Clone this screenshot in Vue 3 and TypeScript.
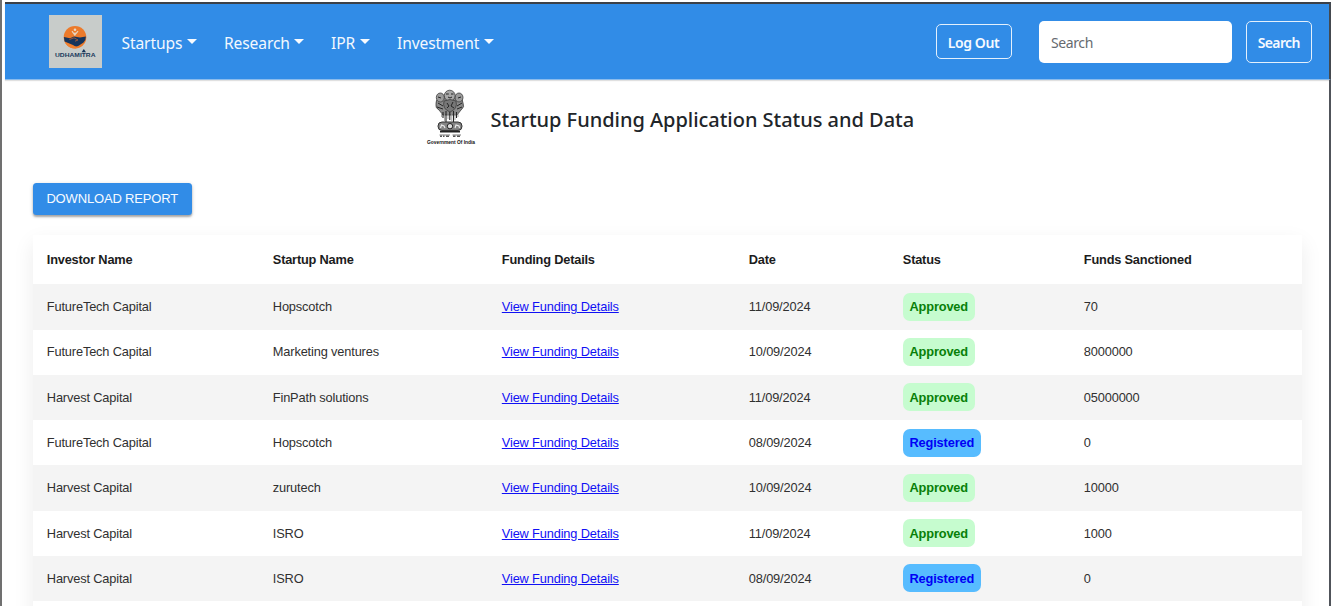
<script setup lang="ts">
type Status = 'Approved' | 'Registered'

interface Application {
  investor: string
  startup: string
  date: string
  status: Status
  funds: string
}

const menus: { label: string; cls: string }[] = [
  { label: 'Startups', cls: 'm-startups' },
  { label: 'Research', cls: 'm-research' },
  { label: 'IPR', cls: 'm-ipr' },
  { label: 'Investment', cls: 'm-investment' },
]

const columns: string[] = [
  'Investor Name',
  'Startup Name',
  'Funding Details',
  'Date',
  'Status',
  'Funds Sanctioned',
]

const applications: Application[] = [
  { investor: 'FutureTech Capital', startup: 'Hopscotch', date: '11/09/2024', status: 'Approved', funds: '70' },
  { investor: 'FutureTech Capital', startup: 'Marketing ventures', date: '10/09/2024', status: 'Approved', funds: '8000000' },
  { investor: 'Harvest Capital', startup: 'FinPath solutions', date: '11/09/2024', status: 'Approved', funds: '05000000' },
  { investor: 'FutureTech Capital', startup: 'Hopscotch', date: '08/09/2024', status: 'Registered', funds: '0' },
  { investor: 'Harvest Capital', startup: 'zurutech', date: '10/09/2024', status: 'Approved', funds: '10000' },
  { investor: 'Harvest Capital', startup: 'ISRO', date: '11/09/2024', status: 'Approved', funds: '1000' },
  { investor: 'Harvest Capital', startup: 'ISRO', date: '08/09/2024', status: 'Registered', funds: '0' },
]
</script>

<template>
  <div class="frame">
    <header class="navbar">
      <svg class="logo" viewBox="0 0 53 53" width="53" height="53">
        <rect width="53" height="53" fill="#c8ccca" />
        <circle cx="26" cy="22.3" r="11.3" fill="#ec7a2b" />
        <path d="M14.9 22 L21 23.2 L25 21.5 L31 22.5 L36.9 21.5 Q37 25 34.5 27.5 L30 30.5 Q27 32.5 24 30 L15.6 26.5 Z" fill="#15345c" />
        <path d="M15.8 27 L23.5 30.5 Q26 32.8 29 31.5 L27 33.6 Q19 33.5 15.8 27Z" fill="#f08030" />
        <path d="M20.5 24.5 L25 22.8 L29 25 L26 26.2" fill="none" stroke="#a65b38" stroke-width=".9" />
        <circle cx="26" cy="14.7" r="1.3" fill="#e9d9c8" />
        <path d="M23 16.2 L25.8 20 L29 16.2 M26 17.5 V20.5" fill="none" stroke="#e9d3bd" stroke-width="1.2" />
        <text class="logo-text" x="6" y="42" textLength="40.5" lengthAdjust="spacingAndGlyphs">UDHAMITRA</text>
        <path d="M32.6 37.2 L34.8 34 L37 37.2 Z" fill="#15345c" />
      </svg>
      <nav class="menus">
        <a v-for="m in menus" :key="m.label" class="menu" :class="m.cls">
          <span>{{ m.label }}</span><i class="caret"></i>
        </a>
      </nav>
      <button class="btn logout">Log Out</button>
      <input class="search" type="text" placeholder="Search" />
      <button class="btn find">Search</button>
    </header>

    <main class="content">
      <div class="title-row">
        <svg class="emblem" viewBox="0 0 50 60" width="50" height="60">
          <g stroke="#3d3d3d" stroke-width=".8">
            <path d="M14 8 Q9 11 10 15 Q9 19 13 21 L17 26 L31 26 L35 21 Q39 18 37 14 Q37 9 33 8 Z" fill="#8b8b8b" />
            <ellipse cx="14.3" cy="8.5" rx="4" ry="4.5" fill="#9a9a9a" />
            <ellipse cx="33" cy="8.5" rx="4" ry="4.5" fill="#9a9a9a" />
            <ellipse cx="23.7" cy="6.7" rx="5.4" ry="5.5" fill="#a8a8a8" />
            <path d="M18 12 Q24 9 30 12 Q32 20 24 23 Q16 20 18 12" fill="#777" />
          </g>
          <g fill="none" stroke="#252525" stroke-width="1">
            <path d="M20 5 H22.8 M25 5 H27.5 M22 8 Q24 10 26 8 M12 8 L15 9 M32 9 L35 8" />
            <path d="M12 14 L17 17 M11 18 L17 20 M31 17 L36 14 M31 20 L36 18 M21 14 L23 17 L21 19 M27 13 L25 17 L28 19" />
            <path d="M17 23 V29 M20 22 V33 M23.8 23 V31 M27.5 22 V33 M30.5 23 V29" stroke-width="1.1" />
          </g>
          <path d="M15.5 24 V28 M18.5 25 V32 M22 25 V30 M25.7 25 V32 M29 25 V31 M32 24 V28" stroke="#999" stroke-width=".8" />
          <rect x="12" y="33" width="24" height="8.4" rx="4" fill="#858585" stroke="#333" stroke-width="1" />
          <circle cx="24" cy="37.2" r="2.7" fill="#ddd" stroke="#222" />
          <path d="M14.5 39 L15.5 36 L18 37 L19 39 M29 39 L30 36 L33 37 L33.5 39" fill="none" stroke="#eee" stroke-width="1.1" />
          <path d="M14 42.6 H34" stroke="#222" stroke-width="1.8" />
          <path d="M13.5 46 H24 M26.5 46 H35" stroke="#555" stroke-width=".8" />
          <path d="M14 47.2 H16 M17 47.2 H18.5 M20 47.2 H23 M27 47.2 H29.5 M31 47.2 H34" stroke="#555" stroke-width="1.6" />
          <text class="emblem-text" x="1" y="55.4" textLength="48" lengthAdjust="spacingAndGlyphs">Government Of India</text>
        </svg>
        <h1 class="title">Startup Funding Application Status and Data</h1>
      </div>

      <button class="download">DOWNLOAD REPORT</button>

      <div class="table">
        <div class="row head">
          <span v-for="c in columns" :key="c">{{ c }}</span>
        </div>
        <div v-for="(a, i) in applications" :key="i" class="row">
          <span>{{ a.investor }}</span>
          <span>{{ a.startup }}</span>
          <span><a class="link">View Funding Details</a></span>
          <span>{{ a.date }}</span>
          <span class="status"><b class="badge" :class="a.status.toLowerCase()">{{ a.status }}</b></span>
          <span>{{ a.funds }}</span>
        </div>
        <div class="row"></div>
      </div>
    </main>
  </div>
</template>

<style>
body {
  margin: 0;
  overflow: hidden;
  background: #fff;
}
</style>

<style scoped>
.frame {
  box-sizing: border-box;
  height: 606px;
  overflow: hidden;
  border-left: 2px solid #707070;
  padding: 2px 0 0 3px;
  background: #fff;
}
.navbar {
  box-sizing: border-box;
  display: flex;
  align-items: center;
  height: 78px;
  padding: 0 17.5px 0 44px;
  border-top: 2px solid #3b4048;
  border-right: 2px solid #44494f;
  border-bottom: 1px solid #8cbcec;
  background: #318ce7;
  box-shadow: 0 1px 1px rgba(0, 0, 0, 0.12);
  font-family: "Noto Sans", "Open Sans", sans-serif;
}
.logo {
  flex: none;
}
.logo-text {
  font: 700 6.2px "Liberation Sans", sans-serif;
  fill: #203a5c;
}
.menus {
  display: flex;
  margin-left: 19.5px;
  padding-top: 3px;
}
.menu {
  display: flex;
  align-items: center;
  box-sizing: border-box;
  color: #f3f8fe;
  font-size: 15.6px;
  letter-spacing: -0.12px;
  line-height: 24px;
  white-space: nowrap;
}
.m-startups { width: 102.5px; }
.m-research { width: 107px; }
.m-ipr { width: 66px; }
.caret {
  margin: -3px 0 0 4.6px;
  border-top: 5px solid #f8fbff;
  border-left: 5px solid transparent;
  border-right: 5px solid transparent;
}
.btn {
  box-sizing: border-box;
  flex: none;
  padding: 1px 0 0;
  border: 1.5px solid #e4f0fc;
  border-radius: 5px;
  background: transparent;
  color: #f6faff;
  font: 600 14px "Noto Sans", sans-serif;
  letter-spacing: -0.38px;
  white-space: nowrap;
}
.logout {
  width: 76px;
  height: 35px;
  margin-left: auto;
}
.find {
  width: 65.5px;
  height: 42px;
  letter-spacing: -0.6px;
}
.search {
  box-sizing: border-box;
  flex: none;
  width: 193px;
  height: 42px;
  margin: 0 14px 0 27.5px;
  padding: 1px 12px 0;
  border: 0;
  border-radius: 5px;
  background: #fff;
  font: 14px "Noto Sans", sans-serif;
  letter-spacing: -0.4px;
}
.search::placeholder {
  color: #666a6f;
  opacity: 1;
}
.content {
  box-sizing: border-box;
  height: 526px;
  padding: 9px 27px 0 27.5px;
  border-right: 2px solid #50545a;
}
.title-row {
  display: flex;
  align-items: flex-start;
  height: 94px;
  padding-left: 393px;
}
.emblem {
  flex: none;
  overflow: visible;
}
.emblem-text {
  font: 700 5.2px "Liberation Sans", sans-serif;
  fill: #111;
}
.title {
  margin: 16px 0 0 15px;
  color: #212529;
  font: 500 20px/30px "Noto Sans", sans-serif;
  letter-spacing: -0.03px;
  white-space: nowrap;
}
.download {
  display: block;
  width: 159.5px;
  height: 32px;
  padding: 0 0 1px;
  border: 0;
  border-radius: 3.5px;
  background: #318ce7;
  box-shadow: 0 2px 2px rgba(0, 0, 0, 0.28), 0 1px 4px rgba(0, 0, 0, 0.16);
  color: #f7fbff;
  font: 13px "Liberation Sans", Arial, sans-serif;
  letter-spacing: -0.16px;
  white-space: nowrap;
}
.table {
  margin-top: 20px;
  background: #fff;
  box-shadow: 0 8px 20px rgba(0, 0, 0, 0.08);
  color: #303030;
  font: 12.8px "Liberation Sans", Arial, sans-serif;
  letter-spacing: -0.15px;
}
.row {
  display: grid;
  grid-template-columns: 226px 229px 247px 154px 181px 1fr;
  align-items: center;
  box-sizing: border-box;
  height: 45.3px;
  padding: 0 0 0.6px 14.3px;
  white-space: nowrap;
}
.row:nth-child(even) {
  background: #f4f4f4;
}
.head {
  height: 49.3px;
  padding-bottom: 0;
  color: #1c1c1c;
  font-weight: 700;
  letter-spacing: -0.2px;
}
.link {
  color: #1010f5;
  text-decoration: underline;
}
.badge {
  display: inline-flex;
  align-items: center;
  box-sizing: border-box;
  height: 28px;
  padding: 0 6.7px;
  border-radius: 7px;
  vertical-align: middle;
}
.approved {
  background: #c6fccf;
  color: #088008;
}
.registered {
  background: #57bcff;
  color: #0000f5;
}
</style>
